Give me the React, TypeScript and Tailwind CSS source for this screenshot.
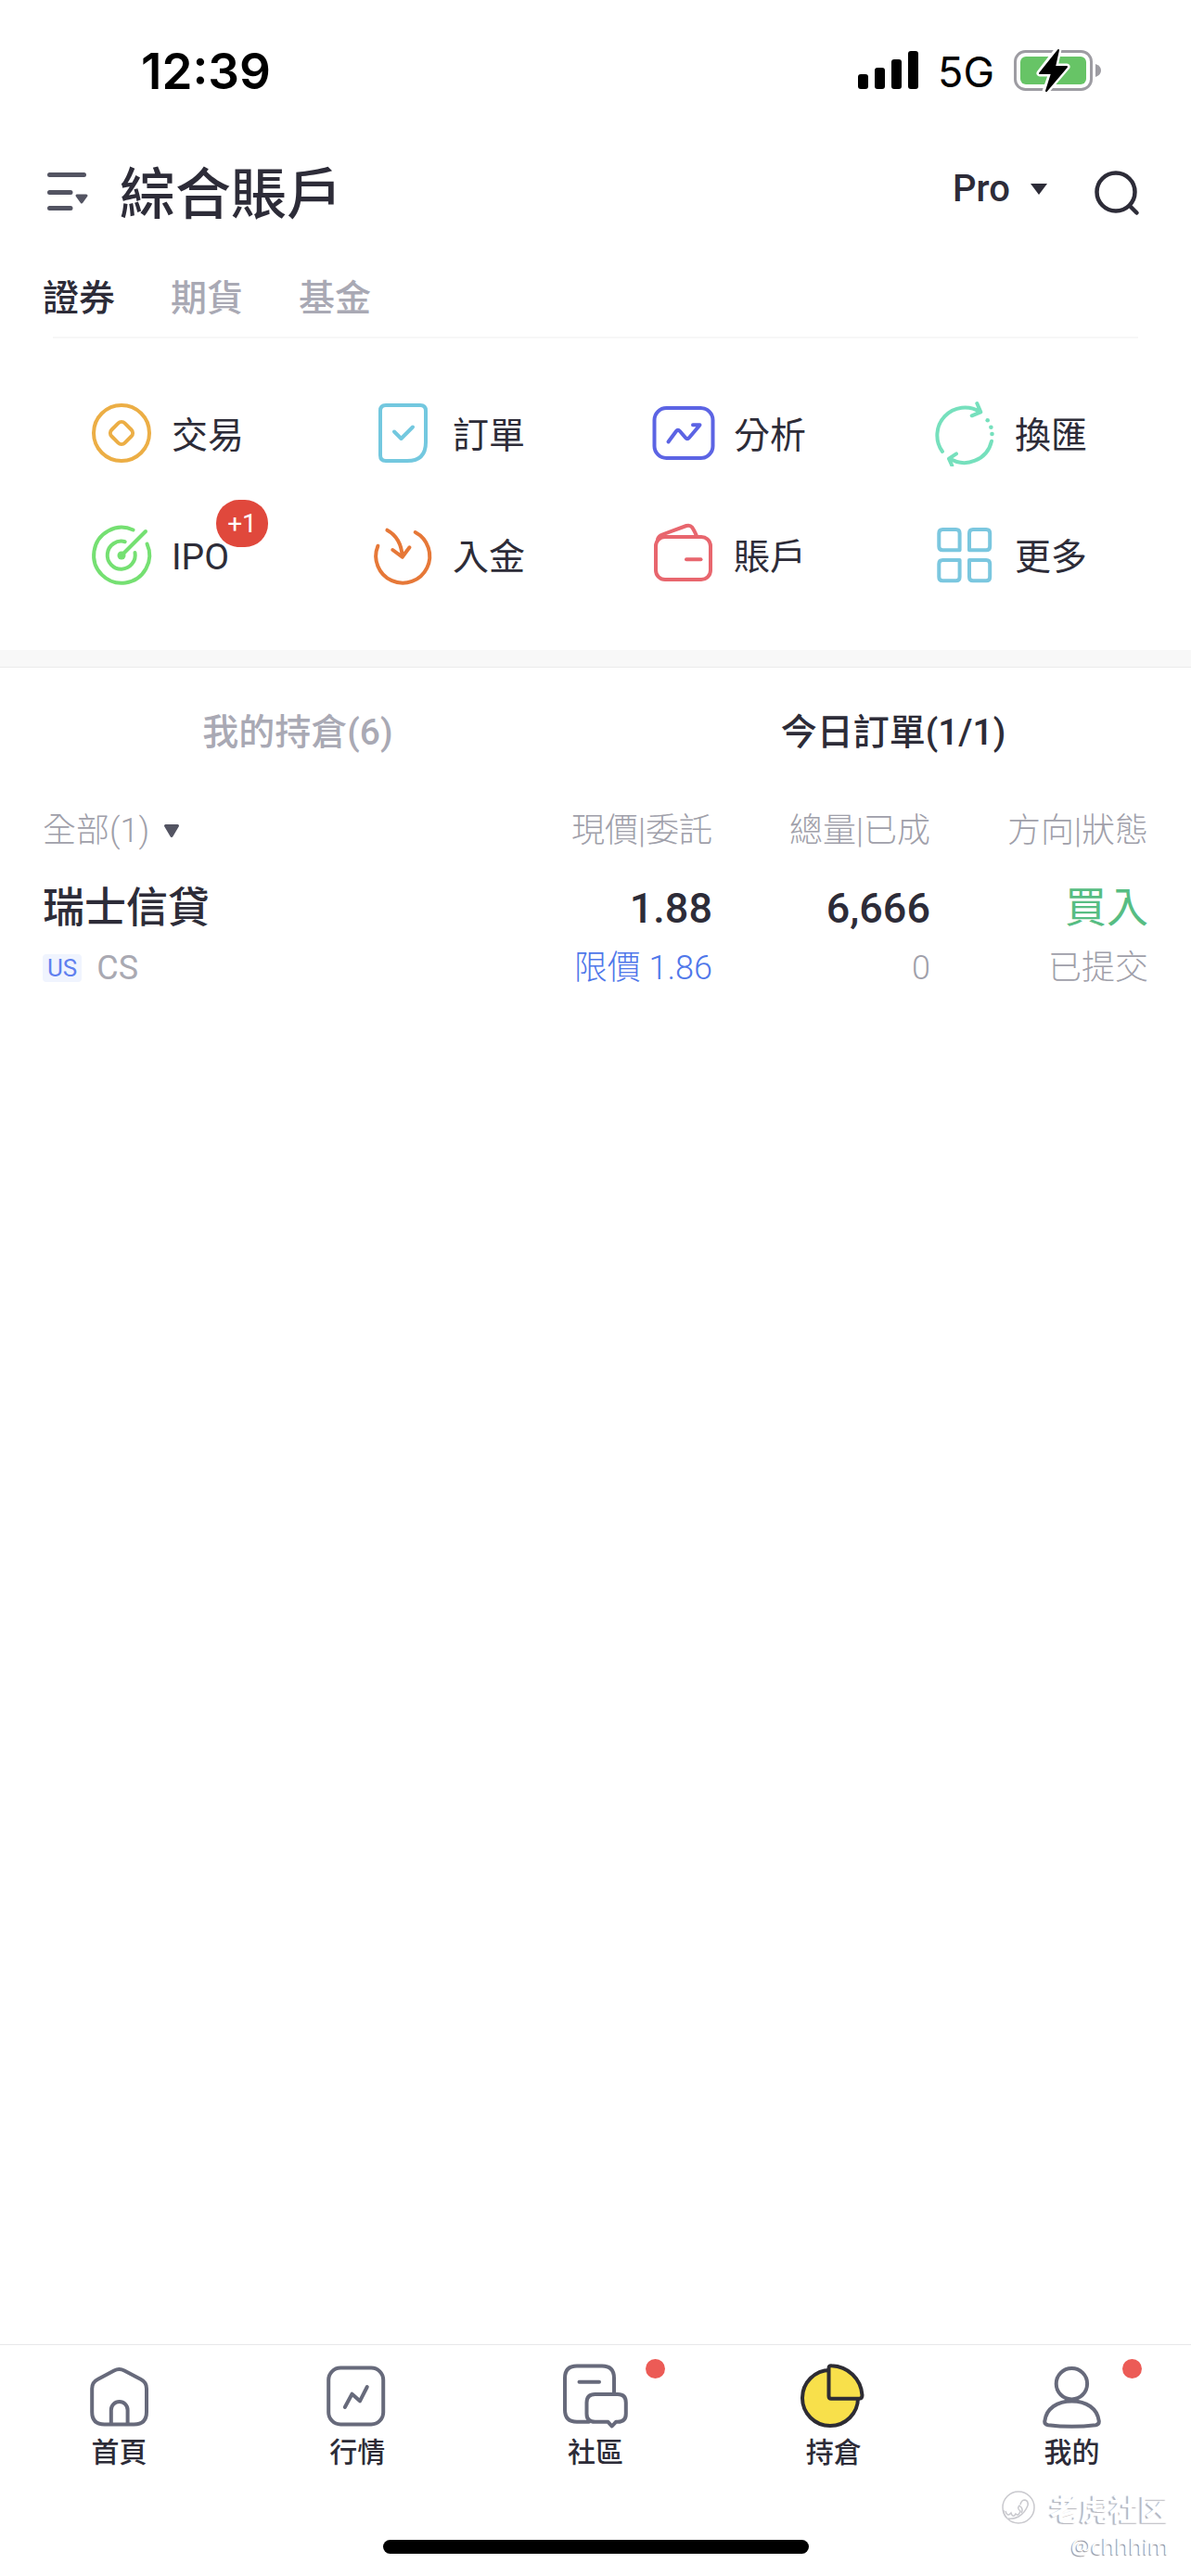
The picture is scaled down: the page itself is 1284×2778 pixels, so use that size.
import type { ReactNode } from 'react';

interface QuickAction {
  label: string;
  icon: ReactNode;
  badge?: string;
}

interface NavItem {
  label: string;
  icon: ReactNode;
  dot?: boolean;
  active?: boolean;
}

interface Order {
  name: string;
  market: string;
  symbol: string;
  price: string;
  limit: string;
  total: string;
  filled: string;
  side: string;
  status: string;
}

function LineIcon({ color, children }: { color: string; children: ReactNode }) {
  return (
    <svg
      className="w-18 h-18 shrink-0"
      viewBox="0 0 72 72"
      fill="none"
      stroke={color}
      strokeWidth="4"
      strokeLinecap="round"
      strokeLinejoin="round"
      aria-hidden="true"
    >
      {children}
    </svg>
  );
}

const quickActions: QuickAction[] = [
  {
    label: '交易',
    icon: (
      <LineIcon color="#ecae45">
        <circle cx="36" cy="36" r="30" />
        <rect x="26" y="26" width="20" height="20" rx="5" transform="rotate(45 36 36)" />
      </LineIcon>
    ),
  },
  {
    label: '訂單',
    icon: (
      <LineIcon color="#73c8df">
        <path d="M18 6H55Q61 6 61 12V46Q61 66 41 66H18Q12 66 12 60V12Q12 6 18 6Z" />
        <path d="M27 34.5L34.5 42L47 29.5" />
      </LineIcon>
    ),
  },
  {
    label: '分析',
    icon: (
      <LineIcon color="#5c64e4">
        <rect x="4.5" y="9" width="63" height="54" rx="13" />
        <path d="M19.5 45.5L28 34Q29.8 31.5 32 34L38 41Q40 43.3 42 41L53 28M46 27.3H53.5" />
      </LineIcon>
    ),
  },
  {
    label: '換匯',
    icon: (
      <LineIcon color="#76e0bd">
        <path d="M12 56A30 30 0 0 1 52.5 13.2M49.3 4L53.3 13.3L43.7 17.3" />
        <path d="M65 44.7A30 30 0 0 1 19.7 63.3M27 58.3L19 63.7L22.3 71" />
        <g fill="#76e0bd" stroke="none">
          <circle cx="60.7" cy="22.3" r="2.3" />
          <circle cx="64.4" cy="29.7" r="2.3" />
          <circle cx="65.5" cy="37" r="2.3" />
        </g>
      </LineIcon>
    ),
  },
  {
    label: 'IPO',
    badge: '+1',
    icon: (
      <LineIcon color="#75e072">
        <path d="M48.6 9.5A30 30 0 1 0 63.5 24.5" />
        <path d="M39.7 22.2A15 15 0 1 0 50.5 34" />
        <path d="M36 37L62 11" />
        <circle cx="36" cy="37" r="4.5" fill="#75e072" stroke="none" />
      </LineIcon>
    ),
  },
  {
    label: '入金',
    icon: (
      <LineIcon color="#e67838">
        <path d="M9.4 26.7A29 29 0 1 0 49.7 12" />
        <path d="M19.4 9.7Q34.5 18 35.7 38M25.3 31L35.7 38.7L43.5 28.3" />
      </LineIcon>
    ),
  },
  {
    label: '賬戶',
    icon: (
      <LineIcon color="#e8666e">
        <rect x="6" y="17" width="59" height="46" rx="10" />
        <path d="M8 19.5Q9 16 13 14.5L39 5Q43 4 45 6.5T50 16" />
        <path d="M39 41.3H54.5" />
      </LineIcon>
    ),
  },
  {
    label: '更多',
    icon: (
      <LineIcon color="#7bc7df">
        <path d="M12.3 9H26.6Q30.6 9 30.6 13V31.3H12.3Q8.3 31.3 8.3 27.3V13Q8.3 9 12.3 9Z" />
        <path d="M45 9H59.2Q63.2 9 63.2 13V27.3Q63.2 31.3 59.2 31.3H41V13Q41 9 45 9Z" />
        <path d="M12.3 42H30.6V60.3Q30.6 64.3 26.6 64.3H12.3Q8.3 64.3 8.3 60.3V46Q8.3 42 12.3 42Z" />
        <path d="M41 42H59.2Q63.2 42 63.2 46V60.3Q63.2 64.3 59.2 64.3H45Q41 64.3 41 60.3Z" />
      </LineIcon>
    ),
  },
];

const navItems: NavItem[] = [
  {
    label: '首頁',
    icon: (
      <LineIcon color="#676a7b">
        <path d="M7.2 28Q7.2 21 13.2 18L31 8.5Q36.5 5.5 42 8.5L60 18Q66 21 66 28V53Q66 66.5 52.5 66.5H20.7Q7.2 66.5 7.2 53Z" />
        <path d="M27.8 66V51A8.9 9 0 0 1 45.6 51V66" />
      </LineIcon>
    ),
  },
  {
    label: '行情',
    icon: (
      <LineIcon color="#676a7b">
        <rect x="5.2" y="5.5" width="59" height="61" rx="13" />
        <path d="M22.8 48L30.5 33.7L39 41.3L46.8 26" />
      </LineIcon>
    ),
  },
  {
    label: '社區',
    dot: true,
    icon: (
      <LineIcon color="#676a7b">
        <path d="M29 63.8H16Q3 63.8 3 50.8V16.5Q3 3.5 16 3.5H43Q56 3.5 56 16.5V33" />
        <path d="M35.5 34H60Q68.8 34 68.8 43V55Q68.8 63.8 60 63.8H58L53.7 68.5L49.5 63.8H35.5Q26.5 63.8 26.5 55V43Q26.5 34 35.5 34Z" />
        <path d="M18.5 20.7H40" />
      </LineIcon>
    ),
  },
  {
    label: '持倉',
    active: true,
    icon: (
      <LineIcon color="#2d2c34">
        <circle cx="32" cy="38" r="30" fill="#f8e04b" />
        <path
          d="M30.5 36V6Q30.5 3 33.5 3.2A34 34 0 0 1 66.5 35Q66.5 38.7 63.5 38.7H33Q30.5 38.7 30.5 36Z"
          fill="#f8e04b"
        />
      </LineIcon>
    ),
  },
  {
    label: '我的',
    dot: true,
    icon: (
      <LineIcon color="#676a7b">
        <circle cx="35.4" cy="22.7" r="16.7" />
        <path d="M6.3 63C8 49 20 41.5 35.5 41.5S63 49 64.8 63C65 65.5 64 66.7 61.3 67.2C44 69.3 27 69.3 10 67.2C7.2 66.7 6 65.5 6.3 63Z" />
      </LineIcon>
    ),
  },
];

const orders: Order[] = [
  {
    name: '瑞士信貸',
    market: 'US',
    symbol: 'CS',
    price: '1.88',
    limit: '限價 1.86',
    total: '6,666',
    filled: '0',
    side: '買入',
    status: '已提交',
  },
];

function StatusBar() {
  return (
    <div className="flex h-38 items-center justify-between pl-38 pr-24 font-['Inter',sans-serif] text-black">
      <span className="pt-0.5 text-[53px] font-semibold leading-none">12:39</span>
      <div className="flex items-center">
        <svg className="w-[66px] h-[42px]" viewBox="0 0 66 42" aria-hidden="true">
          <rect x="0" y="25" width="11" height="16" rx="3" />
          <rect x="18" y="18" width="11" height="23" rx="3" />
          <rect x="36" y="9" width="11" height="32" rx="3" />
          <rect x="54" y="0" width="11" height="41" rx="3" />
        </svg>
        <span className="ml-5 pt-0.5 text-[45px] leading-none">5G</span>
        <svg className="ml-5 w-24 h-12" viewBox="0 0 96 48" aria-hidden="true">
          <rect x="2.5" y="3.5" width="82" height="41" rx="11" fill="none" stroke="#9d9ca2" strokeWidth="3" />
          <path d="M89 17Q95 19 95 24T89 31Z" fill="#9d9ca2" />
          <rect x="8" y="9" width="71" height="30" rx="6" fill="#67c466" />
          <path
            d="M49 1L29 27H42L35 47L58 20H45Z"
            stroke="#fff"
            strokeWidth="7"
            strokeLinejoin="round"
            fill="#fff"
          />
          <path d="M49 2L29 27H42L36 46L58 20H45Z" stroke="#000" strokeWidth="2" strokeLinejoin="round" />
        </svg>
      </div>
    </div>
  );
}

function AccountHeader() {
  return (
    <header className="flex h-28 items-center justify-between pl-12 pr-[54px]">
      <div className="flex items-center">
        <button type="button" aria-label="選單">
          <svg className="w-12 h-12" viewBox="0 0 48 48" fill="none" aria-hidden="true">
            <path
              d="M5.500 4.500H42.500M5.500 23.500H28M5.500 40.500H28"
              stroke="#535462"
              strokeWidth="5"
              strokeLinecap="round"
            />
            <path d="M35 27H45L40 34Z" fill="#535462" stroke="#535462" strokeWidth="3" strokeLinejoin="round" />
          </svg>
        </button>
        <h1 className="ml-[33px] pt-1.5 text-[60px] font-medium leading-[80px]">綜合賬戶</h1>
      </div>
      <div className="flex items-center">
        <div className="flex items-center pb-2">
          <select aria-label="版本" className="appearance-none text-[40px] font-medium leading-[56px]">
            <option>Pro</option>
          </select>
          <svg className="ml-[22px] w-[18px] h-3" viewBox="0 0 18 12" fill="#2d2c38" aria-hidden="true">
            <path d="M0 0H18L9 12Z" />
          </svg>
        </div>
        <button type="button" aria-label="搜尋" className="ml-[50px]">
          <svg
            className="w-[51px] h-[51px]"
            viewBox="0 0 51 51"
            fill="none"
            stroke="#2d2c38"
            strokeWidth="4.500"
            strokeLinecap="round"
            aria-hidden="true"
          >
            <circle cx="24" cy="24" r="20.500" />
            <path d="M39 39L46.500 46.500" />
          </svg>
        </button>
      </div>
    </header>
  );
}

function AssetTabs() {
  return (
    <div className="px-[46px]">
      <div className="flex gap-[60px] pt-[30px] pb-[13px] text-[39px] font-medium leading-[56px]">
        <button type="button">證券</button>
        <button type="button" className="text-[#a9a9b4]">期貨</button>
        <button type="button" className="text-[#a9a9b4]">基金</button>
      </div>
      <div className="mx-[11px] h-0.5 bg-[#f7f7f7]"></div>
    </div>
  );
}

function QuickActions() {
  return (
    <div className="grid grid-cols-4 gap-y-[59px] px-9 pt-[66px] pb-[67px]">
      {quickActions.map((action) => (
        <button key={action.label} type="button" className="flex items-center gap-[18px] pl-[59px] text-[39px] leading-[56px]">
          {action.icon}
          <span className="relative pt-1.5">
            {action.label}
            {action.badge && (
              <span className="absolute left-12 -top-7 h-[51px] w-14 rounded-[25px] bg-[#e0483c] text-center text-[28px] leading-[51px] text-white">
                {action.badge}
              </span>
            )}
          </span>
        </button>
      ))}
    </div>
  );
}

function OrdersTable() {
  return (
    <div className="px-[46px]">
      <table className="w-full table-fixed text-right">
        <thead className="text-4xl leading-[72px] text-[#a0a0aa]">
          <tr>
            <th className="p-0 font-light">
              <div className="flex items-center">
                <select aria-label="篩選" className="appearance-none leading-[72px]">
                  <option>全部(1)</option>
                </select>
                <svg className="ml-3.5 w-[18px] h-4" viewBox="0 0 18 16" aria-hidden="true">
                  <path d="M2.500 2.500H15.500L9 13.500Z" fill="#535462" stroke="#535462" strokeWidth="3" strokeLinejoin="round" />
                </svg>
              </div>
            </th>
            <th className="w-[235px] p-0 font-light">現價|委託</th>
            <th className="w-[235px] p-0 font-light">總量|已成</th>
            <th className="w-[235px] p-0 font-light">方向|狀態</th>
          </tr>
        </thead>
        <tbody>
          {orders.map((order) => (
            <tr key={order.symbol}>
              <td className="pt-[18px] text-left">
                <div className="text-[45px] font-medium leading-[60px]">{order.name}</div>
                <div className="mt-2.5 flex items-center gap-4 text-4xl leading-[48px]">
                  <span className="rounded-sm bg-[#f0f4fe] px-[5px] text-[26px] leading-[30px] text-[#5f80ef]">{order.market}</span>
                  <span className="text-[#a9a9b2]">{order.symbol}</span>
                </div>
              </td>
              <td className="pt-[18px]">
                <div className="text-[45px] font-medium leading-[60px]">{order.price}</div>
                <div className="mt-2.5 text-4xl font-light leading-[48px] text-[#4f77ea]">{order.limit}</div>
              </td>
              <td className="pt-[18px]">
                <div className="text-[45px] font-medium leading-[60px]">{order.total}</div>
                <div className="mt-2.5 text-4xl font-light leading-[48px] text-[#a0a0aa]">{order.filled}</div>
              </td>
              <td className="pt-[18px]">
                <div className="text-[45px] leading-[60px] text-[#57bd83]">{order.side}</div>
                <div className="mt-2.5 text-4xl font-light leading-[48px] text-[#a0a0aa]">{order.status}</div>
              </td>
            </tr>
          ))}
        </tbody>
      </table>
    </div>
  );
}

function BottomNav() {
  return (
    <footer className="relative border-t border-[#e8e8ea] pb-6">
      <nav className="grid grid-cols-5 pt-[19px]">
        {navItems.map((item) => (
          <a
            key={item.label}
            href="#"
            aria-current={item.active ? 'page' : undefined}
            className="relative flex flex-col items-center text-3xl font-medium leading-[50px]"
          >
            {item.icon}
            {item.label}
            {item.dot && (
              <span className="absolute left-1/2 -top-1 ml-[54px] h-[21px] w-[21px] rounded-full bg-[#ec5b56]"></span>
            )}
          </a>
        ))}
      </nav>
      <div className="mx-auto mt-[69px] h-[15px] w-[459px] rounded-full bg-black"></div>

      {/* Marca de agua de la comunidad */}
      <div className="absolute right-6 bottom-3 flex flex-col items-end text-white">
        <div className="flex items-center gap-4 text-[32px] font-bold leading-[44px] [text-shadow:-2px_1px_1px_#b4b4bb]">
          <svg className="w-9 h-9" viewBox="0 0 36 36" fill="none" stroke="#c9c9ce" strokeWidth="1.500" aria-hidden="true">
            <circle cx="18" cy="18" r="17" />
            <path d="M2 21Q2 26 5 29M4 22Q6 29 10 24Q12 30 15 25Q18 28 20 22Q16 19 19 16Q24 20 21 24M20 15Q21 10 25 10Q29 11 28 16Q25 24 18 28Q13 31 7 30" />
          </svg>
          <span className="font-['Noto_Sans_CJK_SC',sans-serif]">老虎社区</span>
        </div>
        <span className="mt-1 pb-1 font-['Open_Sans',sans-serif] text-2xl leading-[32px] [text-shadow:-1px_1px_1px_#8c8c94]">@chhhim</span>
      </div>
    </footer>
  );
}

export default function App() {
  return (
    <div className="flex min-h-screen flex-col bg-white font-['Roboto','Noto_Sans_CJK_TC',sans-serif] text-[#2d2c38]">
      <StatusBar />
      <AccountHeader />
      <main className="flex-1">
        <AssetTabs />
        <QuickActions />
        <div className="h-[19px] border-b border-[#ebebeb] bg-[#f8f8f8]"></div>
        <div className="grid grid-cols-2 text-[39px] font-medium leading-[140px]">
          <button type="button" className="text-[#a9a9b4]">我的持倉(6)</button>
          <button type="button">今日訂單(1/1)</button>
        </div>
        <OrdersTable />
      </main>
      <BottomNav />
    </div>
  );
}
